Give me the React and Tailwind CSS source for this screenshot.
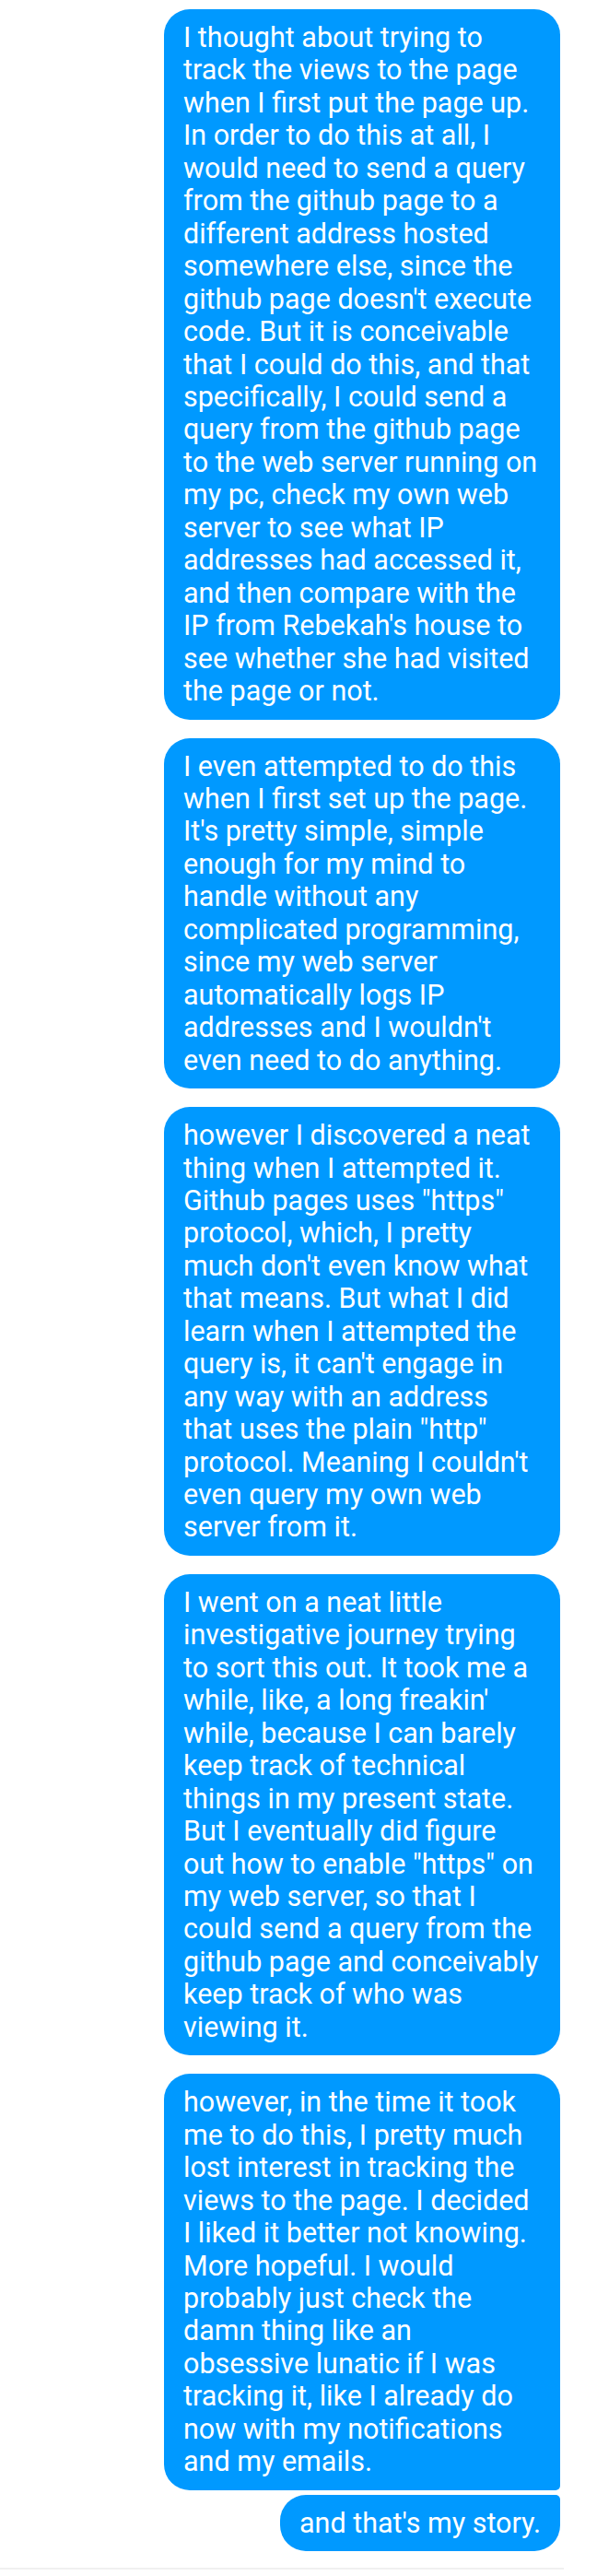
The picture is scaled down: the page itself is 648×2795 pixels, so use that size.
import React from "react";

const messages = [
  {
    lines: [
      "I thought about trying to",
      "track the views to the page",
      "when I first put the page up.",
      "In order to do this at all, I",
      "would need to send a query",
      "from the github page to a",
      "different address hosted",
      "somewhere else, since the",
      "github page doesn't execute",
      "code. But it is conceivable",
      "that I could do this, and that",
      "specifically, I could send a",
      "query from the github page",
      "to the web server running on",
      "my pc, check my own web",
      "server to see what IP",
      "addresses had accessed it,",
      "and then compare with the",
      "IP from Rebekah's house to",
      "see whether she had visited",
      "the page or not.",
    ],
  },
  {
    lines: [
      "I even attempted to do this",
      "when I first set up the page.",
      "It's pretty simple, simple",
      "enough for my mind to",
      "handle without any",
      "complicated programming,",
      "since my web server",
      "automatically logs IP",
      "addresses and I wouldn't",
      "even need to do anything.",
    ],
  },
  {
    lines: [
      "however I discovered a neat",
      "thing when I attempted it.",
      'Github pages uses "https"',
      "protocol, which, I pretty",
      "much don't even know what",
      "that means. But what I did",
      "learn when I attempted the",
      "query is, it can't engage in",
      "any way with an address",
      'that uses the plain "http"',
      "protocol. Meaning I couldn't",
      "even query my own web",
      "server from it.",
    ],
  },
  {
    lines: [
      "I went on a neat little",
      "investigative journey trying",
      "to sort this out. It took me a",
      "while, like, a long freakin'",
      "while, because I can barely",
      "keep track of technical",
      "things in my present state.",
      "But I eventually did figure",
      'out how to enable "https" on',
      "my web server, so that I",
      "could send a query from the",
      "github page and conceivably",
      "keep track of who was",
      "viewing it.",
    ],
  },
];

const lastBlock = [
  "however, in the time it took",
  "me to do this, I pretty much",
  "lost interest in tracking the",
  "views to the page. I decided",
  "I liked it better not knowing.",
  "More hopeful. I would",
  "probably just check the",
  "damn thing like an",
  "obsessive lunatic if I was",
  "tracking it, like I already do",
  "now with my notifications",
  "and my emails.",
];

function Bubble({ lines, className }) {
  return (
    <div
      className={
        "bg-[#0099ff] text-white px-[21px] py-[13px] text-[30.5px] leading-[35.45px] " +
        className
      }
    >
      {lines.map((line, i) => (
        <div key={i} className="whitespace-nowrap">
          {line}
        </div>
      ))}
    </div>
  );
}

function App() {
  return (
    <div
      className="w-[648px] bg-white pt-[10px]"
      style={{ fontFamily: "Roboto, 'Noto Sans', sans-serif" }}
    >
      <div className="flex flex-col items-end pr-[40px]">
        {messages.map((m, i) => (
          <Bubble
            key={i}
            lines={m.lines}
            className="w-[430px] rounded-[28px] mb-[20px]"
          />
        ))}
        <Bubble
          lines={lastBlock}
          className="w-[430px] rounded-[28px] rounded-br-[5px] mb-[5px]"
        />
        <Bubble
          lines={["and that's my story."]}
          className="rounded-[28px] rounded-tr-[5px]"
        />
      </div>
      <div className="mt-[18px] h-[2px] w-[612px] bg-[#f0f0f0]" />
    </div>
  );
}

export default App;
